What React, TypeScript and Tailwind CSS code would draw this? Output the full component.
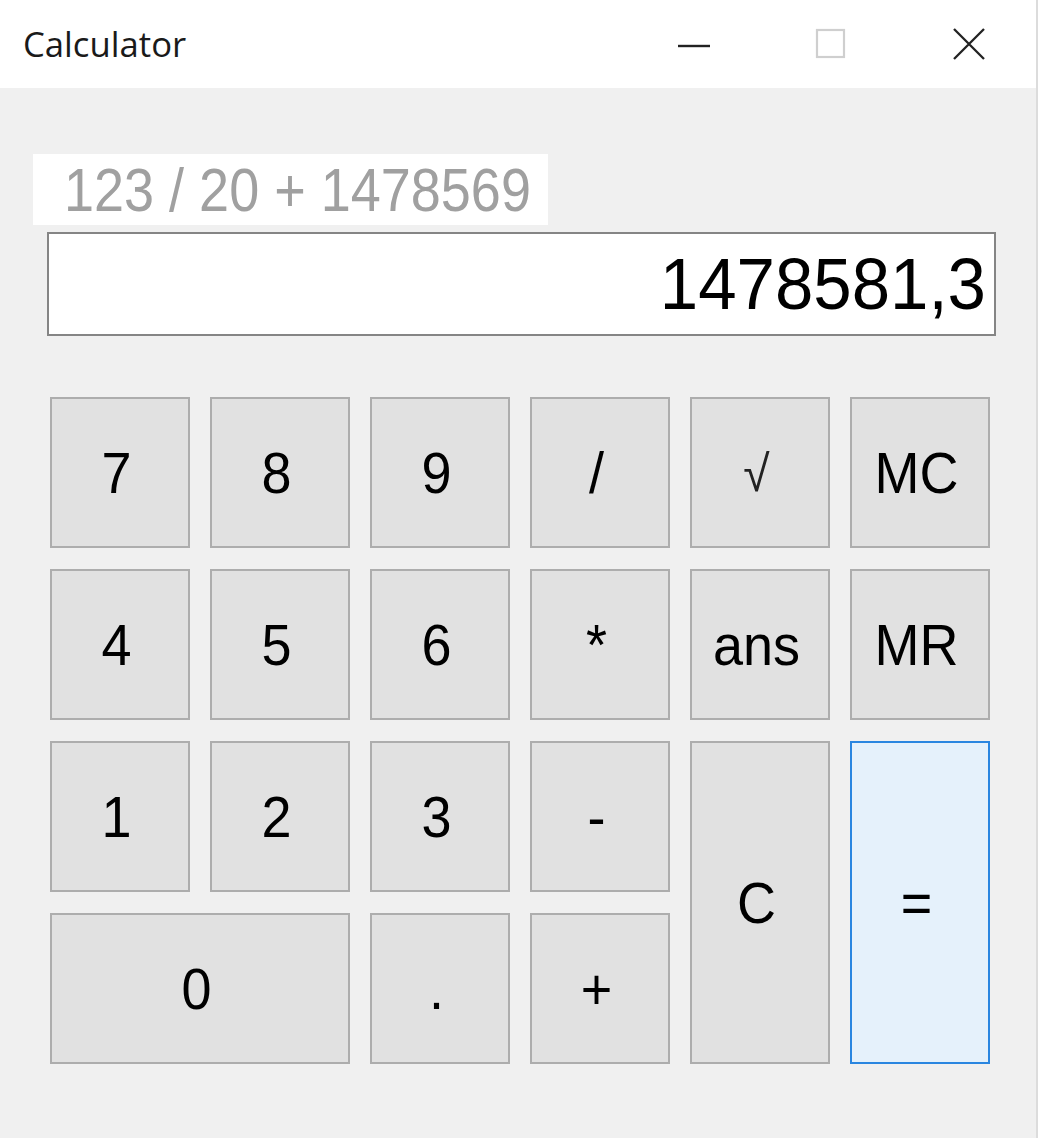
import React from 'react';

type Key = { label: string; area: string; accent?: boolean; symbol?: boolean };

const keys: Key[] = [
  { label: '7', area: 'col-start-1 row-start-1' },
  { label: '8', area: 'col-start-2 row-start-1' },
  { label: '9', area: 'col-start-3 row-start-1' },
  { label: '/', area: 'col-start-4 row-start-1' },
  { label: '√', area: 'col-start-5 row-start-1', symbol: true },
  { label: 'MC', area: 'col-start-6 row-start-1' },
  { label: '4', area: 'col-start-1 row-start-2' },
  { label: '5', area: 'col-start-2 row-start-2' },
  { label: '6', area: 'col-start-3 row-start-2' },
  { label: '*', area: 'col-start-4 row-start-2' },
  { label: 'ans', area: 'col-start-5 row-start-2' },
  { label: 'MR', area: 'col-start-6 row-start-2' },
  { label: '1', area: 'col-start-1 row-start-3' },
  { label: '2', area: 'col-start-2 row-start-3' },
  { label: '3', area: 'col-start-3 row-start-3' },
  { label: '-', area: 'col-start-4 row-start-3' },
  { label: 'C', area: 'col-start-5 row-start-3 row-span-2' },
  { label: '=', area: 'col-start-6 row-start-3 row-span-2', accent: true },
  { label: '0', area: 'col-start-1 row-start-4 col-span-2' },
  { label: '.', area: 'col-start-3 row-start-4' },
  { label: '+', area: 'col-start-4 row-start-4' },
];

function TitleBar() {
  return (
    <div className="h-[88px] bg-white flex items-center shrink-0">
      <span className="ml-[23px] text-[34px] text-[#1a1a1a] font-['Open_Sans',sans-serif] leading-none -mt-[1px] inline-block scale-x-[1.02] origin-left">
        Calculator
      </span>
      <div className="ml-auto flex items-center">
        <svg width="34" height="34" viewBox="0 0 34 34" className="mr-[104px]">
          <line x1="1" y1="19" x2="33" y2="19" stroke="#222" strokeWidth="2.4" />
        </svg>
        <svg width="32" height="32" viewBox="0 0 32 32" className="mr-[105px]">
          <rect x="2" y="2" width="27" height="27" fill="none" stroke="#cfcfcf" strokeWidth="2.2" />
        </svg>
        <svg width="34" height="34" viewBox="0 0 34 34" className="mr-[50px]">
          <path d="M2 2 L32 32 M32 2 L2 32" stroke="#222" strokeWidth="2.3" />
        </svg>
      </div>
    </div>
  );
}

export default function App() {
  return (
    <div className="w-[1038px] h-[1138px] bg-[#f0f0f0] flex flex-col border-r-2 border-[#dcdcdc] font-['Liberation_Sans',Arial,sans-serif]">
      <TitleBar />
      <div className="flex flex-col pl-[33px]">
        <div className="mt-[66px] w-[515px] h-[71px] bg-white flex items-center pl-[31px]">
          <span className="inline-block text-[54px] leading-none text-[#a0a0a0] scale-y-[1.13]">123 / 20 + 1478569</span>
        </div>
        <div className="mt-[7px] ml-[14px] w-[949px] h-[104px] bg-white border-2 border-[#858585] flex items-center justify-end pr-[8px]">
          <span className="inline-block text-[69px] leading-none text-black scale-y-[1.05]">1478581,3</span>
        </div>
        <div className="mt-[61px] ml-[17px] grid grid-cols-[repeat(6,140px)] grid-rows-[repeat(4,151px)] gap-x-[20px] gap-y-[21px]">
          {keys.map((k) => (
            <button
              key={k.label}
              className={`${k.area} flex items-center justify-center pr-[7px] border-2 ${
                k.accent ? 'bg-[#e5f1fb] border-[#2a86e0]' : 'bg-[#e1e1e1] border-[#adadad]'
              } text-black text-[54px] leading-none`}
            >
              <span className={`inline-block ${k.symbol ? "font-['DejaVu_Sans',sans-serif] font-extralight text-[48px] text-[#222]" : ''} scale-y-[1.06]`}>
                {k.label}
              </span>
            </button>
          ))}
        </div>
      </div>
    </div>
  );
}
